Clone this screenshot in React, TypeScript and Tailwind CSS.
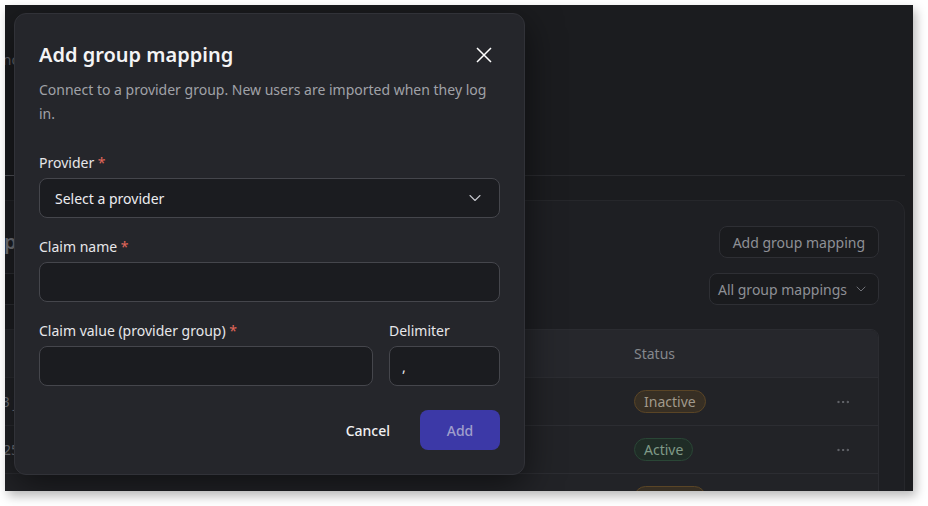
import React from "react";
import { ChevronDown, Ellipsis } from "lucide-react";

function Label({ text, required }: { text: string; required?: boolean }) {
  return (
    <div className="pt-px text-[14px] leading-5 text-[#e7e7ea]">
      {text}
      {required && <span className="text-[#e2675a]"> *</span>}
    </div>
  );
}

function Badge({ kind }: { kind: "active" | "inactive" }) {
  return kind === "active" ? (
    <span className="inline-flex h-[23px] items-center rounded-full border border-[#2a4636] bg-[#1f2c26] px-[9px] text-[14px] text-[#7f9a88]">
      Active
    </span>
  ) : (
    <span className="inline-flex h-[23px] items-center rounded-full border border-[#5a4526] bg-[#372f24] px-[9px] text-[14px] text-[#a19a8c]">
      Inactive
    </span>
  );
}

const rows: { name: string; status: "active" | "inactive" }[] = [
  { name: "Tier 3 jobs", status: "inactive" },
  { name: "Ops 25", status: "active" },
  { name: "Tier 1 admins", status: "inactive" },
];

export default function App() {
  return (
    <div className="h-[506px] w-[928px] bg-white pl-[5px] pt-[5px] font-['Noto_Sans',sans-serif]">
      <div className="relative h-[486px] w-[908px] overflow-hidden bg-[#1b1c1f] shadow-[3px_5px_10px_rgba(0,0,0,0.28)]">
        {/* background page */}
        <div className="ml-[-75px] mr-[8px] flex flex-col">
          <header className="flex h-[171px] flex-col justify-between border-b border-[#2a2b2f]">
            <p className="mt-[45px] pl-[18px] text-[14px] leading-5 text-[#66686e]">Users sync</p>
            <div className="flex pl-[26px]">
              <div className="mb-[-1px] flex h-[36px] w-[58px] items-center justify-center border-b border-[#55575d] text-[14px] text-[#6a6c72]">
                Users
              </div>
            </div>
          </header>
          <section className="mt-[24px] rounded-xl border border-[#26272b] bg-[#1e1f23] px-[25px] pt-[25px]">
            <div className="flex items-center justify-between">
              <h2 className="text-[20px] font-semibold leading-8 text-[#76787e]">Group mappings</h2>
              <button className="h-8 rounded-lg border border-[#2e2f34] bg-[#1a1b1e] px-[13px] text-[14px] text-[#8e9096]">
                Add group mapping
              </button>
            </div>
            <div className="mt-[15px] flex items-center justify-between">
              <div className="h-8 w-[360px] rounded-lg border border-[#2e2f34] bg-[#1a1b1e]" />
              <button className="flex h-8 items-center gap-[6px] rounded-lg border border-[#2e2f34] bg-[#1a1b1e] pl-[8px] pr-[9px] text-[14px] text-[#8e9096]">
                All group mappings
                <ChevronDown size={16} strokeWidth={1.5} className="text-[#6f7177]" />
              </button>
            </div>
            <div className="mt-6 overflow-hidden rounded-t-lg border border-[#2b2c31]">
              <div className="grid h-12 grid-cols-[661px_190px_1fr] items-center border-b border-[#2c2d32] bg-[#26272c] text-[14px] text-[#85878d]">
                <div className="px-4">Key</div>
                <div className="px-4">Status</div>
                <div />
              </div>
              {rows.map((r, i) => (
                <div
                  key={i}
                  className="grid h-12 grid-cols-[661px_190px_1fr] items-center border-b border-[#2c2d32] bg-[#222327] text-[14px] text-[#74767c]"
                >
                  <div className="px-4">{r.name}</div>
                  <div className="px-4">
                    <Badge kind={r.status} />
                  </div>
                  <div className="flex justify-center">
                    <Ellipsis size={16} strokeWidth={1.5} className="text-[#6e7076]" />
                  </div>
                </div>
              ))}
            </div>
          </section>
        </div>

        {/* modal */}
        <div className="absolute left-[9px] top-[8px] w-[511px] rounded-xl border border-[#313238] bg-[#25262b] px-6 pb-6 pt-[27px] shadow-[0_10px_36px_rgba(0,0,0,0.55)]">
          <div className="flex h-7 items-center justify-between">
            <h2 className="text-[20px] font-semibold leading-7 text-[#f4f4f5]">Add group mapping</h2>
            <button className="mr-1 flex h-6 w-6 items-center justify-center text-white">
              <svg width="16" height="16" viewBox="0 0 16 16" fill="none" stroke="currentColor" strokeWidth="1.5">
                <path d="M1 1L15 15M15 1L1 15" />
              </svg>
            </button>
          </div>
          <p className="mt-[9px] text-[14px] leading-6 text-[#a0a2a8]">
            Connect to a provider group. New users are imported when they log in.
          </p>
          <div className="mt-[26px] flex flex-col gap-[18px]">
            <div className="flex flex-col gap-[5px]">
              <Label text="Provider" required />
              <div className="flex h-10 items-center justify-between rounded-lg border border-[#45464c] bg-[#1b1c20] pl-[15px] pr-[14px]">
                <span className="text-[14px] text-[#ededf0]">Select a provider</span>
                <ChevronDown size={20} strokeWidth={1.3} className="text-[#c4c6cc]" />
              </div>
            </div>
            <div className="flex flex-col gap-[5px]">
              <Label text="Claim name" required />
              <div className="h-10 rounded-lg border border-[#45464c] bg-[#1b1c20]" />
            </div>
            <div className="flex gap-4">
              <div className="flex flex-1 flex-col gap-[5px]">
                <Label text="Claim value (provider group)" required />
                <div className="h-10 rounded-lg border border-[#45464c] bg-[#1b1c20]" />
              </div>
              <div className="flex w-[111px] flex-col gap-[5px]">
                <Label text="Delimiter" />
                <div className="flex h-10 items-center rounded-lg border border-[#45464c] bg-[#1b1c20] pl-[12px] text-[14px] text-[#ededf0]">
                  ,
                </div>
              </div>
            </div>
          </div>
          <div className="mt-6 flex justify-end gap-[14px]">
            <button className="h-10 px-4 text-[14px] font-medium text-[#f1f1f3]">Cancel</button>
            <button className="h-10 w-20 rounded-lg bg-[#3c39a7] text-[14px] font-medium text-[#a09fcc]">Add</button>
          </div>
        </div>
      </div>
    </div>
  );
}
